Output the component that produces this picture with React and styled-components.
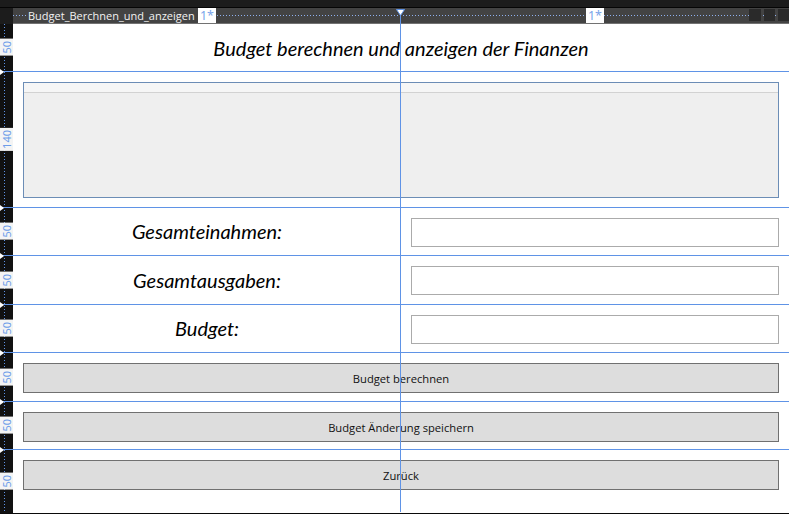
import styled, { createGlobalStyle } from 'styled-components';

const GlobalStyle = createGlobalStyle`
  html, body {
    margin: 0;
    padding: 0;
    background: #1b1b1b;
  }
`;

const ROWS = '48px 136px 48px 49px 48px 49px 48px 1fr';
const BLUE = '#5f93e6';

const Frame = styled.div`
  position: relative;
  width: 789px;
  height: 514px;
  display: grid;
  grid-template-columns: 13px 1fr;
  grid-template-rows: 8px 16px 1fr;
  background: #1b1b1b;
  border-bottom: 1px solid #0a0a0a;
  box-sizing: border-box;
  overflow: hidden;
  font-family: "Open Sans", "Noto Sans", sans-serif;
`;

const TopBar = styled.div`
  grid-column: 1 / 3;
  background: #1c1c1c;
  border-bottom: 1px solid #050505;
`;

const Corner = styled.div`
  background: #1c1c1c;
`;

const HeaderStrip = styled.div`
  display: grid;
  grid-template-columns: 388px 1fr;
  background-color: #434343;
  background-image: repeating-linear-gradient(to right, #8fb0ee 0 1px, transparent 1px 3px);
  background-size: 100% 1px;
  background-position: 0 7px;
  background-repeat: no-repeat;
  border-bottom: 1px solid #727272;
`;

const HeaderCol = styled.div`
  display: grid;
  grid-template-columns: minmax(0, 1fr) auto minmax(0, 1fr);
  align-items: stretch;
`;

const TabTitle = styled.div`
  justify-self: start;
  margin-left: 13px;
  padding: 0 3px 0 2px;
  background: #434343;
  color: #f2f2f2;
  font-family: "Open Sans", sans-serif;
  font-size: 11px;
  line-height: 15px;
  white-space: nowrap;
`;

const StarBox = styled.div`
  background: #ffffff;
  color: #7aa4ea;
  font-family: "Noto Sans", sans-serif;
  font-size: 12.5px;
  line-height: 15px;
  padding: 0 2px;
`;

const WindowButtons = styled.div`
  justify-self: end;
  display: flex;
  gap: 3px;
  padding-top: 1px;
  span {
    width: 11px;
    height: 12px;
    background: #2a2a2a;
  }
  span:first-child {
    width: 12px;
  }
`;

const Ruler = styled.div`
  display: grid;
  grid-template-rows: ${ROWS};
  background-color: #111111;
  background-image: repeating-linear-gradient(to bottom, ${BLUE} 0 1px, transparent 1px 3px);
  background-size: 1px 100%;
  background-position: 4px 0;
  background-repeat: no-repeat;
`;

const RulerCell = styled.div`
  position: relative;
  display: flex;
  align-items: center;
  border-bottom: ${p => (p.$last ? 'none' : `1px solid ${BLUE}`)};
  box-sizing: border-box;
  &::after {
    content: ${p => (p.$last ? 'none' : "''")};
    position: absolute;
    left: 0;
    bottom: -4px;
    border-top: 3px solid transparent;
    border-bottom: 3px solid transparent;
    border-left: 4px solid #ffffff;
  }
`;

const RulerLabel = styled.div`
  width: 13px;
  background: #f4f4f4;
  color: #6d9de9;
  font-family: "Noto Sans", sans-serif;
  font-size: 11px;
  line-height: 13px;
  writing-mode: vertical-rl;
  transform: rotate(180deg);
  padding: 2px 0;
  display: flex;
  align-items: center;
`;

const Canvas = styled.div`
  display: grid;
  grid-template-rows: ${ROWS};
  background: #ffffff;
`;

const Row = styled.div`
  display: grid;
  grid-template-columns: ${p => (p.$split ? '388px 1fr' : '1fr')};
  padding: ${p => p.$pad || '0'};
  border-bottom: ${p => (p.$last ? 'none' : `1px solid ${BLUE}`)};
  box-sizing: border-box;
  min-height: 0;
`;

const Title = styled.div`
  display: flex;
  align-items: center;
  justify-content: center;
  font-family: Lato, "Open Sans", sans-serif;
  font-style: italic;
  font-size: 20px;
  color: #000;
  padding-top: 1px;
`;

const DataGrid = styled.div`
  border: 1px solid #6c8db6;
  background: #efefef;
  display: flex;
  flex-direction: column;
`;

const GridHeader = styled.div`
  height: 9px;
  background: #f6f6f6;
  border-bottom: 1px solid #d2d2d2;
`;

const Label = styled.div`
  display: flex;
  align-items: center;
  justify-content: center;
  font-family: Lato, "Open Sans", sans-serif;
  font-style: italic;
  font-size: 20px;
  color: #000;
  padding-bottom: 1px;
`;

const Field = styled.div`
  padding: 10px 10px 0 10px;
`;

const TextBox = styled.input`
  display: block;
  width: 100%;
  height: 29px;
  box-sizing: border-box;
  border: 1px solid #ababab;
  background: #fff;
  outline: none;
  margin: 0;
`;

const Button = styled.button`
  display: block;
  width: 100%;
  height: 30px;
  margin: 0;
  padding: 0;
  border: 1px solid #707070;
  background: #dddddd;
  color: #111;
  font-family: "Open Sans", sans-serif;
  font-size: 11.2px;
  line-height: 29px;
`;

const Guide = styled.div`
  position: absolute;
  left: 400px;
  top: 14px;
  bottom: 1px;
  width: 1px;
  background: ${BLUE};
`;

const GuideMarker = styled.svg`
  position: absolute;
  left: 396px;
  top: 9px;
`;

const rulerRows = ['50', '140', '50', '50', '50', '50', '50', '50'];

function App() {
  return (
    <>
      <GlobalStyle />
      <Frame>
        <TopBar />
        <Corner />
        <HeaderStrip>
          <HeaderCol>
            <TabTitle>Budget_Berchnen_und_anzeigen</TabTitle>
            <StarBox>1*</StarBox>
            <div />
          </HeaderCol>
          <HeaderCol>
            <div />
            <StarBox>1*</StarBox>
            <WindowButtons>
              <span />
              <span />
              <span />
            </WindowButtons>
          </HeaderCol>
        </HeaderStrip>

        <Ruler>
          {rulerRows.map((h, i) => (
            <RulerCell key={i} $last={i === rulerRows.length - 1}>
              <RulerLabel>{h}</RulerLabel>
            </RulerCell>
          ))}
        </Ruler>

        <Canvas>
          <Row>
            <Title>Budget berechnen und anzeigen der Finanzen</Title>
          </Row>
          <Row $pad="10px 10px 9px 10px">
            <DataGrid>
              <GridHeader />
            </DataGrid>
          </Row>
          <Row $split>
            <Label>Gesamteinahmen:</Label>
            <Field><TextBox readOnly /></Field>
          </Row>
          <Row $split>
            <Label>Gesamtausgaben:</Label>
            <Field><TextBox readOnly /></Field>
          </Row>
          <Row $split>
            <Label>Budget:</Label>
            <Field><TextBox readOnly /></Field>
          </Row>
          <Row $pad="10px 10px 0 10px">
            <div><Button>Budget berechnen</Button></div>
          </Row>
          <Row $pad="10px 10px 0 10px">
            <div><Button>Budget Änderung speichern</Button></div>
          </Row>
          <Row $pad="10px 10px 0 10px" $last>
            <div><Button>Zurück</Button></div>
          </Row>
        </Canvas>

        <Guide />
        <GuideMarker width="9" height="7" viewBox="0 0 9 7">
          <path d="M0.5 0.5 H8.5 L4.5 6.5 Z" fill="#ffffff" stroke={BLUE} strokeWidth="1" />
        </GuideMarker>
      </Frame>
    </>
  );
}

export default App;
